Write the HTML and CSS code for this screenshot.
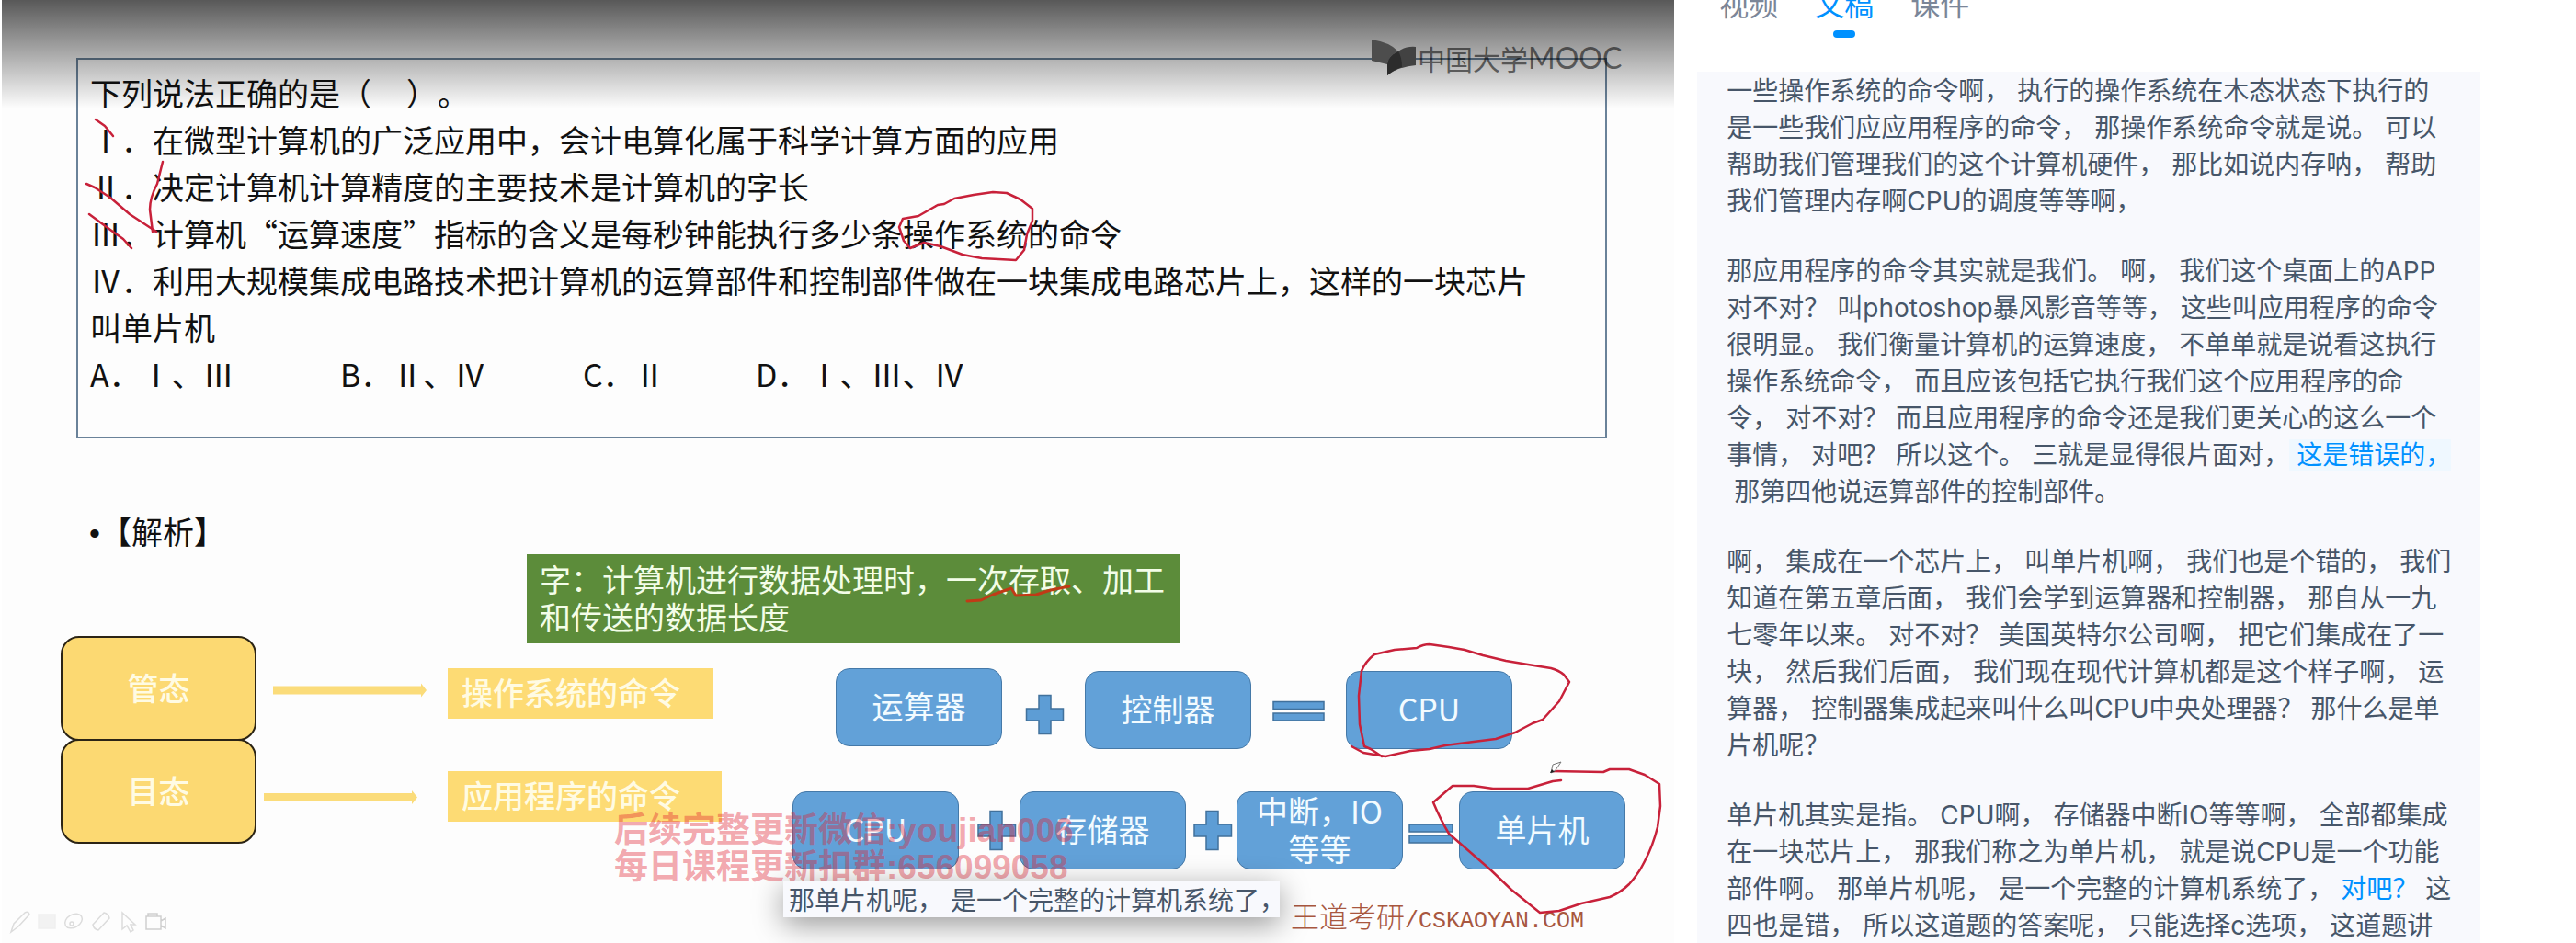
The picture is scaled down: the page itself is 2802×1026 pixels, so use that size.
FILE: index.html
```html
<!DOCTYPE html>
<html lang="zh-CN">
<head>
<meta charset="utf-8">
<meta name="viewport" content="width=device-width, initial-scale=1">
<title>中国大学MOOC</title>
<link rel="stylesheet" href="styles.css">
</head>
<body>
<div class="page">
  <main class="video">
    <section class="question">
      <p>下列说法正确的是（&nbsp;&nbsp;&nbsp;&nbsp;&nbsp;）。</p>
      <p>Ⅰ．在微型计算机的广泛应用中，会计电算化属于科学计算方面的应用</p>
      <p>Ⅱ．决定计算机计算精度的主要技术是计算机的字长</p>
      <p>Ⅲ．计算机“运算速度”指标的含义是每秒钟能执行多少条操作系统的命令</p>
      <p>Ⅳ．利用大规模集成电路技术把计算机的运算部件和控制部件做在一块集成电路芯片上，这样的一块芯片叫单片机</p>
      <div class="options">
        <span>A．Ⅰ、Ⅲ</span>
        <span>B．Ⅱ、Ⅳ</span>
        <span>C．Ⅱ</span>
        <span>D．Ⅰ、Ⅲ、Ⅳ</span>
      </div>
    </section>
    <h2 class="analysis"><span class="bullet">•</span>【解析】</h2>

    <div class="canvas">
      <p class="definition">字：计算机进行数据处理时，一次存取、加工和传送的数据长度</p>
      <div class="node mode mode-kernel">管态</div>
      <div class="node mode mode-user">目态</div>
      <div class="node command command-os">操作系统的命令</div>
      <div class="node command command-app">应用程序的命令</div>
      <div class="node part part-alu">运算器</div>
      <div class="node part part-control">控制器</div>
      <div class="node part part-cpu">CPU</div>
      <div class="node part part-core">CPU</div>
      <div class="node part part-memory">存储器</div>
      <div class="node part part-io">中断，IO<br>等等</div>
      <div class="node part part-mcu">单片机</div>
      <p class="credit">王道考研<span>/CSKAOYAN.COM</span></p>

      <svg class="layer" aria-hidden="true">
        <g fill="#fbdc7a">
          <path d="M297 746.500H458V743.500L464 751L458 758.500V755.500H297Z"/>
          <path d="M287 863H448V860L454 867.500L448 875V872H287Z"/>
        </g>
        <g fill="#5d9dd5" stroke="#41719c" stroke-width="1.500">
          <path d="M1130 756.500h13v14.500h13.500v13h-13.500v14.500h-13v-14.500h-13.500v-13h13.500z"/>
          <path d="M1077 882.500h13v14.500h14.500v13h-14.500v14.500h-13v-14.500h-13v-13h13z"/>
          <path d="M1312 882.500h13v14.500h14.500v13h-14.500v14.500h-13v-14.500h-13v-13h13z"/>
          <path d="M1385 763.500h55v8h-55zM1385 776h55v8h-55z"/>
          <path d="M1533 897h47v8h-47zM1533 909h47v8h-47z"/>
        </g>
      </svg>

      <p class="contact">后续完整更新微信:youjian006<br>每日课程更新扣群:656099058</p>

      <svg class="layer" aria-hidden="true">
        <g fill="none" stroke="#c8213a" stroke-width="2.500" stroke-linecap="round" stroke-linejoin="round">
          <path d="M104 130L114 137L123 148"/>
          <path d="M94 200L103 204L120 215L141 233L170 252"/>
          <path d="M177 176L171 200Q163 215 163 228L166 252"/>
          <path d="M97 233L120 250L134 260L143 270"/>
          <path d="M990 270L983 262L978 247L982 238L999 235L1020 223L1027 222L1038 216L1059 212L1080 209L1095 210L1110 217L1123 227L1123 240L1117 255L1114 272L1105 283L1068 281L1047 277L1023 268L1005 264L990 270"/>
          <path d="M1470 812L1483 819L1507 823L1534 817L1555 815L1572 811L1603 807L1627 804L1648 797L1667 787L1678 783L1696 763L1707 742L1701 734Q1695 729 1687 727L1662 723L1638 719L1613 713L1593 707L1576 704L1555 701Q1548 701 1541 705L1517 707L1495 712Q1485 720 1481 730L1478 757L1479 788L1484 812L1491 815L1503 823"/>
          <path d="M1698 849L1689 850L1662 858H1624L1603 855H1580L1559 873Q1567 892 1576 907L1622 947L1644 968L1675 993L1696 991L1720 983L1751 976Q1763 971 1772 962Q1783 950 1789 937Q1798 920 1803 900L1806 877L1805 853L1797 848L1789 843L1772 837H1751L1744 840L1689 839"/>
          <path stroke="#c13a16" stroke-width="3" d="M1052 654L1067 653L1080 647L1100 640L1105 648L1127 647L1143 642L1163 638"/>
        </g>
        <path d="M1687 841l2-9l9-3l-6 9z" fill="#fff" stroke="#777"/>
        <path d="M1686 841l2-4l3 3z" fill="#222"/>
        <g fill="none" stroke="#dcdcdc" stroke-width="1.500">
          <path d="M12 1014l3-9l12-12q4-2 5 2l-12 13z"/>
          <path d="M42 995h18v15h-18z" fill="#f2f2f2" stroke="#efefef"/>
          <ellipse cx="80" cy="1002" rx="10" ry="7" transform="rotate(-30 80 1002)"/>
          <circle cx="78" cy="1005" r="2"/>
          <path d="M101 1006l12-13q5 1 6 6l-12 13q-5-1-6-6z"/>
          <path d="M133 993v18l5-4l4 7l3-2l-3-6h5z"/>
          <path d="M159 997h16v14h-16zM175 1002l5-3v11l-5-3zM161 997v-3h10v3" stroke="#cfcfcf"/>
        </g>
      </svg>
    </div>

    <div class="shade"></div>
    <div class="brand">
      <svg width="50" height="40" viewBox="0 0 50 40" aria-hidden="true">
        <path d="M0 0Q20 3 29 13Q18 18 17 27L0 23Z" fill="#4d4d4d"/>
        <path d="M29 13Q37 7 48 8V28Q28 30 17 39V27Q18 18 29 13Z" fill="#424242"/>
        <path d="M29 13Q33 19 33 30Q24 33 17 39V27Q18 18 29 13Z" fill="#2c2c2c"/>
      </svg>
      <span>中国大学</span><span class="brand-latin">MOOC</span>
    </div>
    <p class="subtitle">那单片机呢，<span class="seg">是一个完整的计算机系统了，</span></p>
  </main>

  <aside class="sidebar">
    <nav class="tabs">
      <button type="button" class="tab">视频</button>
      <button type="button" class="tab active">文稿</button>
      <button type="button" class="tab">课件</button>
    </nav>
    <div class="transcript">
      <p><span class="seg">一些操作系统的命令啊，</span><span class="seg">执行的操作系统在木态状态下执行的是一些我们应应用程序的命令，</span><span class="seg">那操作系统命令就是说。</span><span class="seg">可以帮助我们管理我们的这个计算机硬件，</span><span class="seg">那比如说内存呐，</span><span class="seg">帮助我们管理内存啊CPU的调度等等啊，</span></p>
      <p><span class="seg">那应用程序的命令其实就是我们。</span><span class="seg">啊，</span><span class="seg">我们这个桌面上的APP对不对？</span><span class="seg">叫photoshop暴风影音等等，</span><span class="seg">这些叫应用程序的命令很明显。</span><span class="seg">我们衡量计算机的运算速度，</span><span class="seg">不单单就是说看这执行操作系统命令，</span><span class="seg">而且应该包括它执行我们这个应用程序的命令，</span><span class="seg">对不对？</span><span class="seg">而且应用程序的命令还是我们更关心的这么一个事情，</span><span class="seg">对吧？</span><span class="seg">所以这个。</span><span class="seg">三就是显得很片面对，</span><span class="seg current marked">这是错误的，</span><span class="seg">那第四他说运算部件的控制部件。</span></p>
      <p><span class="seg">啊，</span><span class="seg">集成在一个芯片上，</span><span class="seg">叫单片机啊，</span><span class="seg">我们也是个错的，</span><span class="seg">我们知道在第五章后面，</span><span class="seg">我们会学到运算器和控制器，</span><span class="seg">那自从一九七零年以来。</span><span class="seg">对不对？</span><span class="seg">美国英特尔公司啊，</span><span class="seg">把它们集成在了一块，</span><span class="seg">然后我们后面，</span><span class="seg">我们现在现代计算机都是这个样子啊，</span><span class="seg">运算器，</span><span class="seg">控制器集成起来叫什么叫CPU中央处理器？</span><span class="seg">那什么是单片机呢？</span></p>
      <p><span class="seg">单片机其实是指。</span><span class="seg">CPU啊，</span><span class="seg">存储器中断IO等等啊，</span><span class="seg">全部都集成在一块芯片上，</span><span class="seg">那我们称之为单片机，</span><span class="seg">就是说CPU是一个功能部件啊。</span><span class="seg">那单片机呢，</span><span class="seg">是一个完整的计算机系统了，</span><span class="seg current">对吧？</span><span class="seg">这四也是错，</span><span class="seg">所以这道题的答案呢，</span><span class="seg">只能选择c选项，</span><span class="seg">这道题讲</span></p>
    </div>
  </aside>
</div>
</body>
</html>
```
FILE: styles.css
```css
* {
  box-sizing: border-box;
}

body {
  margin: 0;
  background: #fff;
  font-family: Inter, "Noto Sans CJK SC", sans-serif;
  text-spacing-trim: space-all;
  text-autospace: no-autospace;
}

p,
h2 {
  margin: 0;
}

.page {
  display: grid;
  grid-template-columns: 13fr 7fr;
  height: 100vh;
  overflow: hidden;
}

/* Video frame */

.video {
  position: relative;
  min-width: 0;
  overflow: hidden;
  padding: 63px 73px 0 83px;
  background: #fdfdfd;
  border-bottom: 3px solid #000;
  box-shadow: inset 2px 0 #fff;
  font-family: "Noto Sans CJK SC", sans-serif;
  font-size: 34px;
  color: #111;
}

.question {
  padding: 10px 64px 43px 13px;
  border: 2px solid #6a8299;
  line-height: 51px;
}

.options {
  display: grid;
  grid-template-columns: 272px 264px 188px auto;
}

.analysis {
  margin-top: 76px;
  padding-left: 14px;
  font-size: 34px;
  font-weight: 400;
  line-height: 50px;
}

.bullet {
  font-family: "Liberation Sans", sans-serif;
}

.canvas,
.layer {
  position: absolute;
  top: 0;
  left: 0;
  width: 100%;
  height: 100%;
}

.definition {
  position: absolute;
  left: 573px;
  top: 603px;
  width: 711px;
  padding: 6px 14px 9px;
  background: #5c8c3a;
  color: #f3fde8;
  line-height: 41px;
}

.node {
  position: absolute;
  display: flex;
  align-items: center;
  justify-content: center;
  padding-bottom: 4px;
  text-align: center;
  line-height: 41px;
}

.mode {
  left: 66px;
  width: 213px;
  height: 114px;
  background: #fcd972;
  border: 2px solid #2b2415;
  border-radius: 20px;
  color: #fffbe3;
  font-weight: 500;
}

.mode-kernel { top: 692px; }
.mode-user { top: 804px; }

.command {
  left: 487px;
  height: 55px;
  padding-left: 15px;
  justify-content: flex-start;
  background: #fddb74;
  color: #fffbe3;
  font-weight: 500;
}

.command-os { top: 727px; width: 289px; }
.command-app { top: 839px; width: 298px; }

.part {
  width: 181px;
  height: 85px;
  background: #62a1d8;
  border: 1px solid #4579a8;
  border-radius: 15px;
  color: #f2fbff;
}

.part-alu { left: 909px; top: 727px; }
.part-control { left: 1180px; top: 730px; }
.part-cpu { left: 1464px; top: 730px; }
.part-core { left: 862px; top: 861px; }
.part-memory { left: 1109px; top: 861px; }
.part-io { left: 1345px; top: 861px; }
.part-mcu { left: 1587px; top: 861px; }

.credit {
  position: absolute;
  left: 1404px;
  top: 974px;
  font-size: 31px;
  line-height: 44px;
  color: #a8573f;
  font-weight: 300;
  white-space: nowrap;
}

.credit span {
  font-family: "Liberation Mono", monospace;
  font-size: 25px;
}

.contact {
  position: absolute;
  left: 668px;
  top: 884px;
  font-family: "Liberation Sans", "Noto Sans CJK SC", sans-serif;
  font-size: 37px;
  font-weight: 700;
  line-height: 40px;
  color: rgba(226, 32, 48, 0.4);
  white-space: nowrap;
}

.shade {
  position: absolute;
  top: 0;
  left: 2px;
  right: 0;
  height: 118px;
  background: linear-gradient(rgba(0, 0, 0, 0.65), rgba(0, 0, 0, 0));
}

.brand {
  position: absolute;
  top: 43px;
  right: 57px;
  display: flex;
  align-items: center;
  height: 40px;
  font-size: 30px;
  line-height: 40px;
  color: rgba(0, 0, 0, 0.55);
}

.brand-latin {
  font-family: Lato, sans-serif;
  font-size: 32px;
}

.subtitle {
  position: absolute;
  left: 852px;
  top: 958px;
  width: 540px;
  padding: 0 6px;
  background: #f8f9fd;
  box-shadow: 0 8px 32px rgba(0, 0, 0, 0.4);
  color: #475669;
  font-size: 28px;
  line-height: 40px;
  white-space: nowrap;
}

/* Sidebar */

.sidebar {
  min-width: 0;
  padding: 0 104px 0 25px;
}

.tabs {
  display: flex;
  gap: 40px;
  height: 78px;
  padding-left: 24px;
}

.tab {
  height: 55px;
  margin-top: -14px;
  padding: 0;
  border: 0;
  background: none;
  font: inherit;
  font-size: 32px;
  line-height: 40px;
  color: #7b8698;
  display: flex;
  flex-direction: column;
  align-items: center;
  justify-content: space-between;
}

.tab.active {
  color: #0091ff;
}

.tab.active::after {
  content: "";
  width: 24px;
  height: 8px;
  border-radius: 4px;
  background: #0091ff;
}

.transcript {
  display: flex;
  flex-direction: column;
  gap: 36px;
  padding: 1px 30px 40px 32px;
  background: #f8f9fd;
  color: #475669;
  font-size: 28px;
  line-height: 40px;
}

.seg {
  padding-left: 8px;
}

.transcript .seg:first-child {
  padding-left: 0;
}

.current {
  color: #0091ff;
}

.marked {
  background: #eff8ff;
}
```
